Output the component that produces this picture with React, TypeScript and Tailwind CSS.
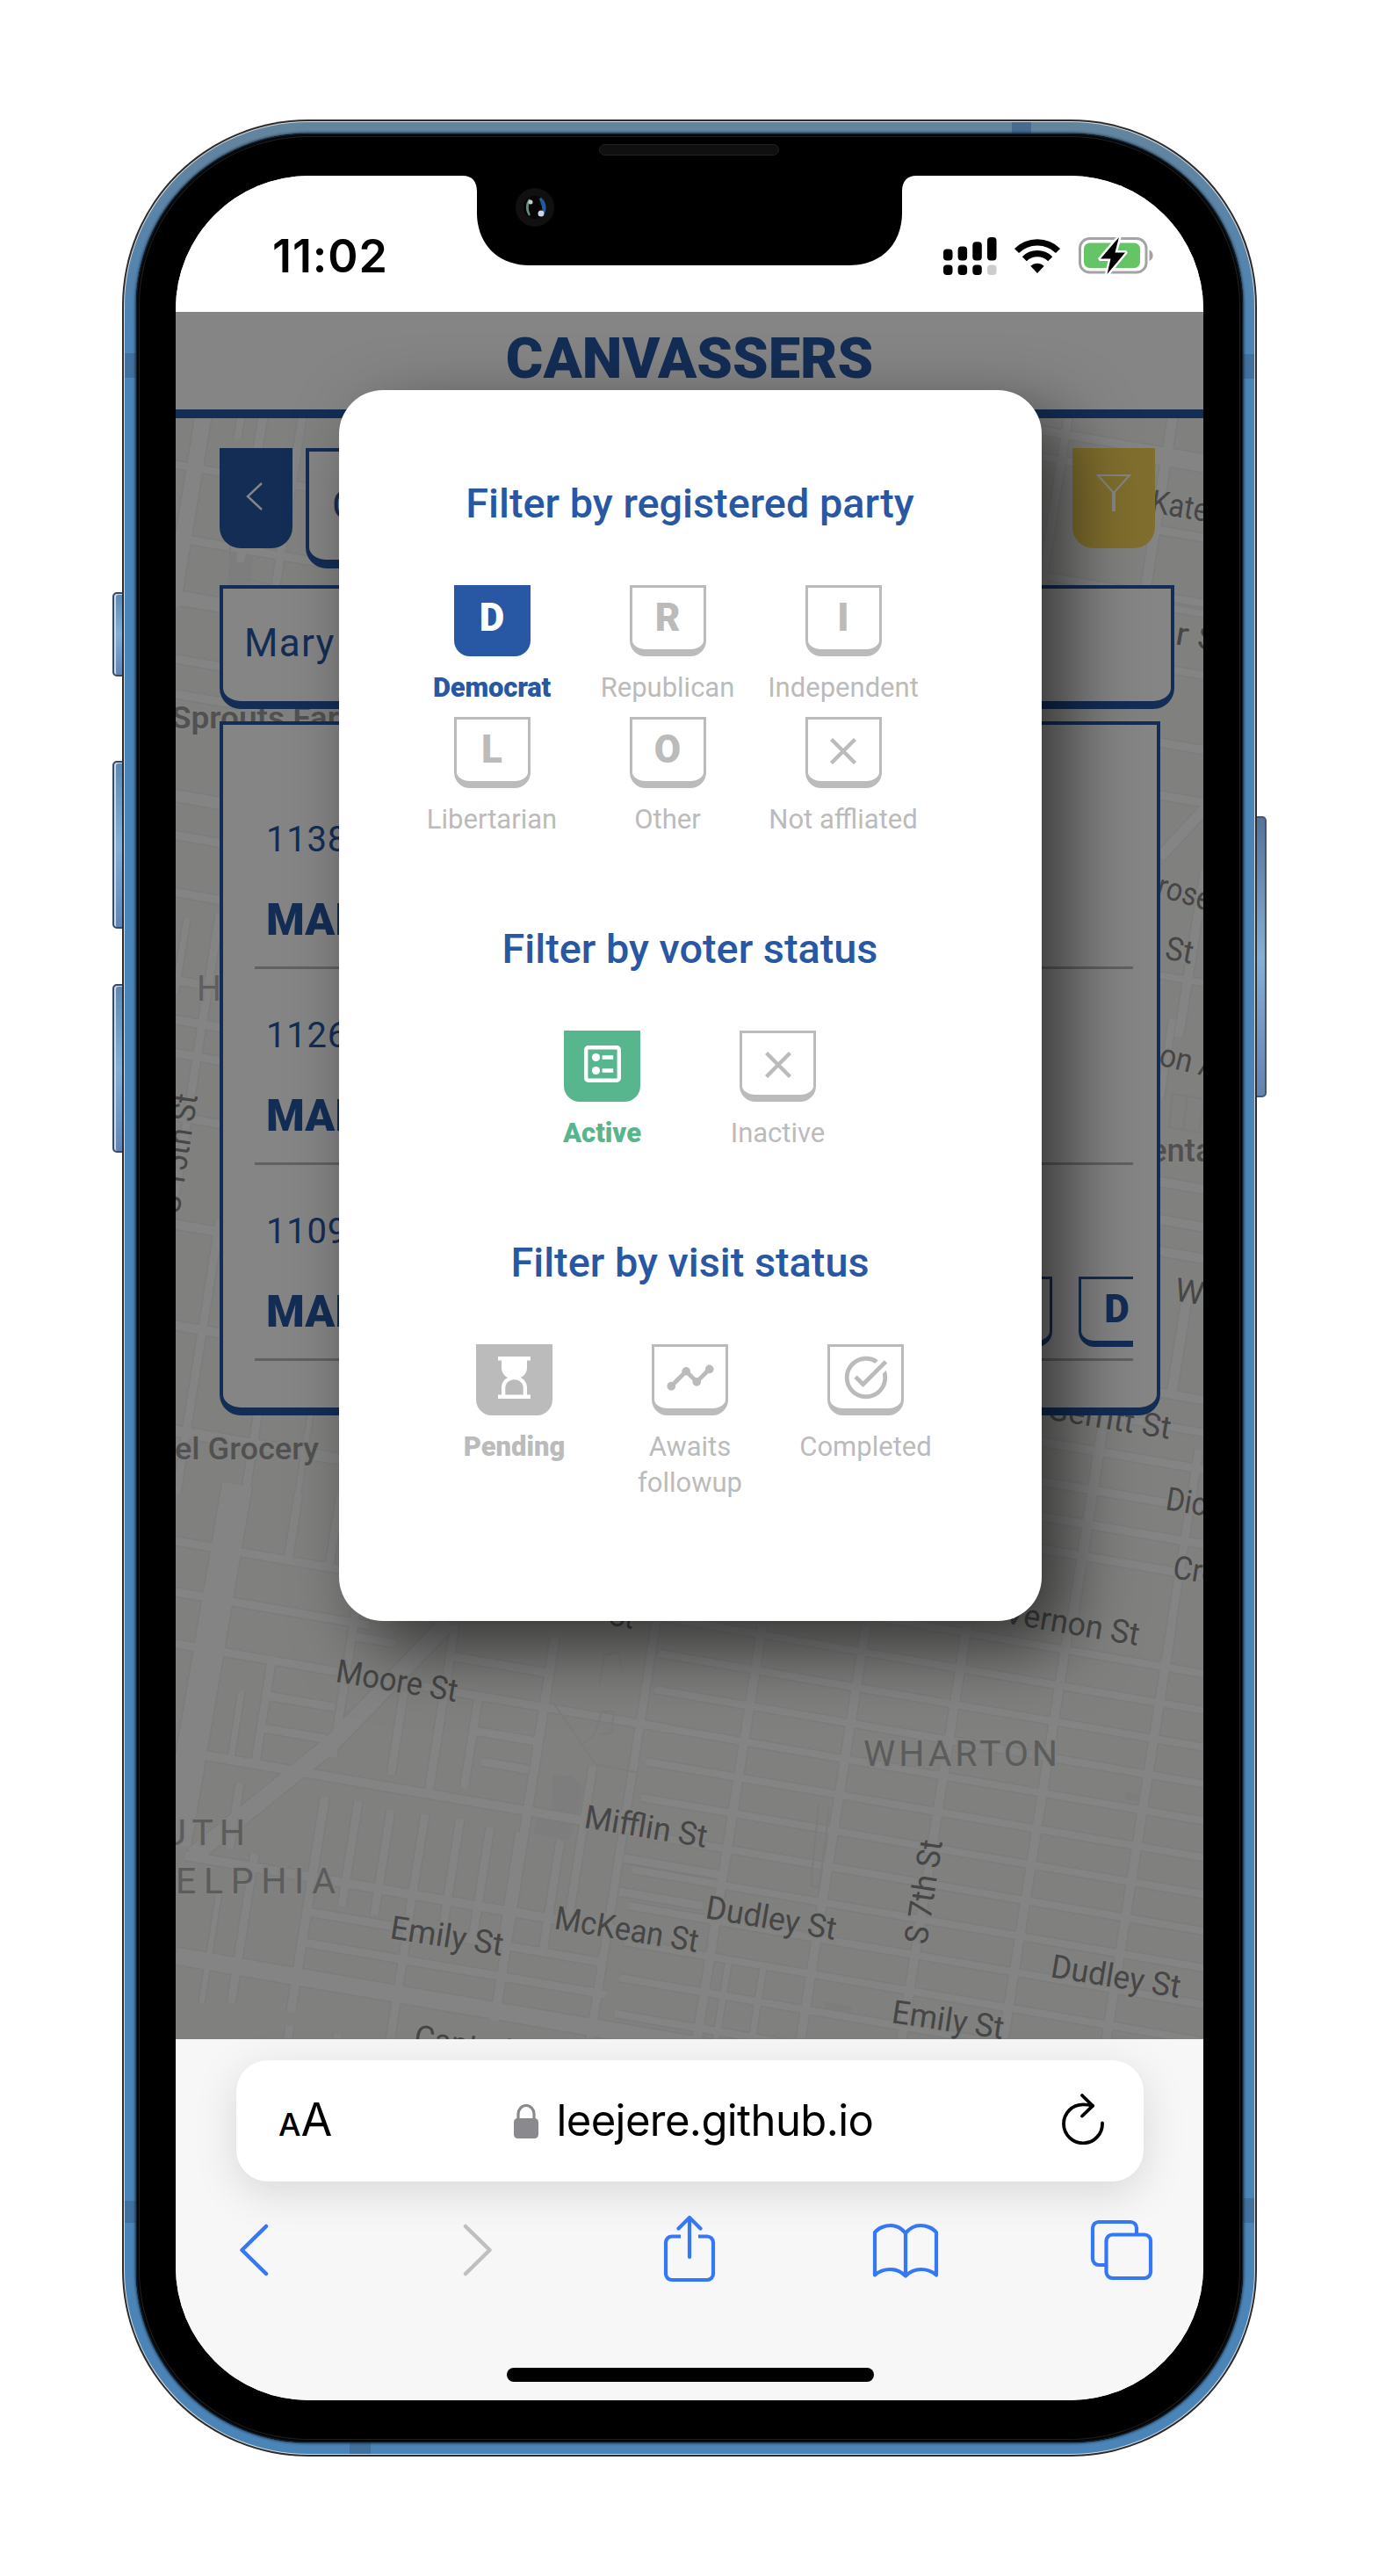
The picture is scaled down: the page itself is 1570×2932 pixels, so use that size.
import React from "react";
import { MdTaskAlt, MdTimeline } from "react-icons/md";

type Pt = [number, number];

/* ---------- Map ---------- */

const ROAD_SLOPE = 0.172;
const AVE_SLOPE = -0.158;

const across = (x1: number, y1: number, x2: number, w = 9): [Pt, Pt, number] => [
  [x1, y1],
  [x2, y1 + (x2 - x1) * ROAD_SLOPE],
  w,
];
const down = (x1: number, y1: number, y2: number, w = 9): [Pt, Pt, number] => [
  [x1, y1],
  [x1 + (y2 - y1) * AVE_SLOPE, y2],
  w,
];

const roads: [Pt, Pt, number][] = [
  // South-east blocks
  ...Array.from({ length: 17 }, (_, i) => across(760 - i * 5, 1800 + i * 41, 1372, 8)),
  ...[868, 986, 1101, 1217, 1334].map((x) => down(x, 1850, 2325, 10)),
  down(748, 1840, 2325, 9),
  down(829, 2235, 2325, 7),
  down(869, 2240, 2325, 7),
  // South-west blocks
  across(200, 1754, 395),
  across(200, 1812, 420),
  across(200, 1871, 760),
  across(233, 1998, 740, 10),
  across(211, 2112, 720, 10),
  across(345, 2175, 690),
  across(340, 2210, 690),
  across(200, 2226, 900, 19),
  across(304, 1930, 381),
  across(300, 1967, 371),
  across(400, 1862, 450),
  across(513, 1885, 625),
  across(540, 1970, 610),
  across(548, 2005, 602),
  across(710, 2115, 820),
  across(705, 2153, 800),
  down(632, 1863, 2300, 10),
  down(518, 1850, 2040),
  down(545, 1930, 2035),
  down(507, 1920, 2030),
  down(460, 1925, 2020),
  down(412, 1790, 2000),
  down(388, 1700, 1780),
  down(340, 1700, 1775),
  down(310, 1885, 2010, 9),
  down(275, 1925, 2005, 7),
  down(273, 2030, 2105),
  down(370, 2045, 2290, 10),
  down(408, 2050, 2170),
  down(445, 2060, 2180),
  down(484, 2065, 2190),
  down(524, 2070, 2195),
  down(558, 2080, 2205),
  down(592, 2085, 2210),
  down(638, 2095, 2220),
  down(675, 2010, 2200),
  down(290, 2110, 2280),
  down(250, 2150, 2280, 6),
  down(465, 2190, 2325),
  down(330, 2305, 2325),
  down(385, 2315, 2325),
  [[510, 1847], [376, 1986], 19],
  [[376, 1986], [220, 2112], 19],
  [[270, 1690], [200, 2100], 34],
  // West edge
  [[232, 470], [196, 690], 18],
  across(195, 528, 420, 8),
  across(200, 612, 420, 9),
  across(200, 680, 300, 16),
  across(200, 750, 300),
  across(200, 790, 300),
  across(196, 905, 300, 13),
  across(196, 950, 300),
  across(196, 1015, 300),
  down(300, 470, 640, 10),
  down(345, 470, 680, 9),
  down(275, 470, 500, 8),
  down(250, 1040, 1400, 9),
  down(213, 1045, 1130, 7),
  across(196, 1115, 255),
  across(196, 1160, 260),
  across(196, 1198, 255),
  across(196, 1270, 255),
  across(196, 1393, 250, 10),
  across(196, 1508, 255, 10),
  down(250, 1390, 1700, 9),
  across(196, 1628, 390, 12),
  down(295, 1600, 1700, 9),
  down(355, 1600, 1700, 6),
  // East edge
  down(1216, 476, 700, 9),
  across(1186, 490, 1372, 9),
  across(1186, 520, 1300, 8),
  across(1310, 520, 1372, 14),
  across(1300, 600, 1372, 9),
  across(1186, 655, 1372, 8),
  down(1335, 476, 680, 11),
  across(1320, 690, 1372, 7),
  across(1320, 760, 1372, 8),
  across(1320, 845, 1372, 9),
  across(1320, 905, 1372, 9),
  [[1321, 975], [1372, 920], 12],
  down(1372, 990, 1180, 10),
  across(1320, 1110, 1372, 7),
  down(1335, 1160, 1250, 8),
  across(1320, 1345, 1372, 10),
  across(1320, 1388, 1372, 10),
  across(1320, 1424, 1372, 10),
  down(1354, 1460, 1590, 11),
  across(1320, 1585, 1372, 9),
  across(1180, 1598, 1372, 8),
  across(1180, 1640, 1372, 9),
  across(1180, 1685, 1372, 9),
  across(1180, 1725, 1372, 9),
  across(1180, 1762, 1372, 9),
  down(1257, 1615, 1850, 11),
  down(1365, 1650, 1850, 9),
];

interface Label {
  t: string;
  a: Pt;
  b: Pt;
  size?: number;
  fill?: string;
  weight?: number;
}

const labels: Label[] = [
  { t: "Kate", a: [1309, 583], b: [1374, 594] },
  { t: "r St", a: [1337, 733], b: [1400, 744] },
  { t: "Sprouts Far", a: [195, 829], b: [386, 829], weight: 600, fill: "#9c9c9c", size: 35 },
  { t: "rose", a: [1315, 1019], b: [1376, 1037] },
  { t: "St", a: [1325, 1091], b: [1356, 1097] },
  { t: "on A", a: [1318, 1212], b: [1384, 1228] },
  { t: "ental", a: [1309, 1322], b: [1390, 1322], weight: 500, fill: "#9a9a9a", size: 36 },
  { t: "Wi", a: [1336, 1480], b: [1377, 1487] },
  { t: "H", a: [224, 1139], b: [252, 1139], fill: "#b4b4b4", size: 41 },
  { t: "S 15th St", a: [204, 1382], b: [225, 1247] },
  { t: "el Grocery", a: [199, 1661], b: [363, 1661], weight: 500, fill: "#9c9c9c", size: 35 },
  { t: "Gerritt St", a: [1191, 1615], b: [1331, 1638] },
  { t: "Dick", a: [1326, 1718], b: [1388, 1728] },
  { t: "Cro", a: [1334, 1796], b: [1386, 1804] },
  { t: "Vernon St", a: [1142, 1847], b: [1295, 1873] },
  { t: "St", a: [692, 1849], b: [720, 1854] },
  { t: "Moore St", a: [381, 1914], b: [519, 1937] },
  { t: "Mifflin St", a: [664, 2080], b: [803, 2103] },
  { t: "McKean St", a: [630, 2195], b: [793, 2222] },
  { t: "Dudley St", a: [802, 2183], b: [950, 2208] },
  { t: "Emily St", a: [443, 2206], b: [571, 2226] },
  { t: "S 7th St", a: [1055, 2214], b: [1073, 2096] },
  { t: "Dudley St", a: [1195, 2250], b: [1342, 2274] },
  { t: "Emily St", a: [1014, 2302], b: [1141, 2321] },
  { t: "Cantrell", a: [470, 2330], b: [588, 2350] },
];

const CityMap = () => (
  <svg viewBox="200 476 1170 1845" width="1170" height="1845" className="absolute left-0 top-[121px]" fontFamily="Roboto, sans-serif">
    <rect x="200" y="476" width="1170" height="1845" fill="#f5f5f1" />
    <g fill="#eeefee">
      <path d="M262 630l26 4-3 38-26-3z" />
      <path d="M630 2020l22 2 12 14-6 26-10 32-40-6 4-28 16 2z" />
      <path d="M1282 2040l18 3-2 8-18-3zM938 2278l32 6-2 14-30-6z" />
    </g>
    {roads.map(([a, b, w], i) => (
      <line key={i} x1={a[0]} y1={a[1]} x2={b[0]} y2={b[1]} stroke="#ebedee" strokeWidth={w + 3} />
    ))}
    {roads.map(([a, b, w], i) => (
      <line key={i} x1={a[0]} y1={a[1]} x2={b[0]} y2={b[1]} stroke="#fdfdfd" strokeWidth={w} />
    ))}
    <g fill="none" stroke="#ebedee" strokeWidth="2">
      <path d="M630 1938l48 70 46 9M659 1988l18-14 8-26h14l-3 24-14 2M932 2054l-9 92 10 2 11-91" />
      <path d="M262 590v64l30 8 80 20M246 1900M682 1918l6-34 16-4 4 22M1335 1245l36 6-6 38-34-6zM1352 1248l-5 38" />
    </g>
    {labels.map((l, i) => {
      const dx = l.b[0] - l.a[0];
      const dy = l.b[1] - l.a[1];
      return (
        <text
          key={i}
          transform={`translate(${l.a[0]} ${l.a[1]}) rotate(${(Math.atan2(dy, dx) * 180) / Math.PI})`}
          textLength={Math.hypot(dx, dy)}
          lengthAdjust="spacingAndGlyphs"
          fontSize={l.size ?? 37}
          fontWeight={l.weight ?? 400}
          fill={l.fill ?? "#868686"}
          stroke="#f8f8f5"
          strokeWidth="4"
          paintOrder="stroke"
        >
          {l.t}
        </text>
      );
    })}
    <g fill="#b0b0b0" fontWeight="400" stroke="#f8f8f5" strokeWidth="4" paintOrder="stroke" fontSize="41">
      <text x="983" y="2010" textLength="221" lengthAdjust="spacing">WHARTON</text>
      <text x="119" y="2100" textLength="160" lengthAdjust="spacing">SOUTH</text>
      <text x="200" y="2155" textLength="182" lengthAdjust="spacing">ELPHIA</text>
    </g>
  </svg>
);

/* ---------- Voter list ---------- */

const voters = [
  { number: "1138", name: "MARY", tags: false },
  { number: "1126", name: "MARY", tags: false },
  { number: "1109", name: "MARY", tags: true },
];

const Tag = ({ children }: { children?: React.ReactNode }) => (
  <div className="mt-[28px] flex h-[80px] w-[87px] shrink-0 justify-center rounded-b-[18px] border-[3px] border-b-[7px] border-[#2857a4] text-[44px] leading-[68px] font-black">
    {children}
  </div>
);

const VoterRow = ({ number, name, tags }: (typeof voters)[number]) => (
  <div className="flex h-[223px] flex-col overflow-hidden border-b-[3px] border-[#bbb] pl-[13px] text-[#2857a4]">
    <div className="mt-[52px] text-[40px] leading-[48px] tracking-[0.8px]">{number}</div>
    <div className="-mt-px flex items-start">
      <div className="mt-[38px] w-[808px] shrink-0 text-[50px] leading-[60px] font-black">{name}</div>
      {tags && (
        <div className="flex gap-[30px]">
          <Tag />
          <Tag>D</Tag>
        </div>
      )}
    </div>
  </div>
);

/* ---------- Filter modal ---------- */

const CrossIcon = () => (
  <svg width="30" height="30" viewBox="0 0 30 30" fill="none" stroke="currentColor" strokeWidth="4.4" className="mt-[3px]">
    <path d="M1.5 1.5l27 27M28.5 1.5l-27 27" />
  </svg>
);

const BallotIcon = () => (
  <svg width="42" height="42" viewBox="0 0 42 42" fill="currentColor">
    <rect x="2.2" y="2.2" width="37.6" height="37.6" rx="2.5" fill="none" stroke="currentColor" strokeWidth="4.4" />
    <circle cx="13.5" cy="13.5" r="4.6" />
    <circle cx="13.5" cy="28.5" r="4.6" />
    <path d="M20.6 11.3h12.6v4.4H20.6zM20.6 26.3h12.6v4.4H20.6z" />
  </svg>
);

const HourglassIcon = () => (
  <svg width="37" height="48" viewBox="0 0 37 48" fill="currentColor">
    <path d="M0 0h37v4.6h-4v7.9c0 5.3-2.7 9-7 11.5 4.300 2.500 7 6.200 7 11.500v7.900h4V48H0v-4.600h4v-7.900c0-5.300 2.700-9 7-11.500-4.300-2.500-7-6.200-7-11.500V4.600H0z" />
    <path d="M8.300 43.400v-7.500c0-5.600 4.600-9.600 10.200-9.600s10.200 4 10.200 9.600v7.500z" fill="#bbb" />
  </svg>
);

interface Option {
  label: string;
  mark: React.ReactNode;
  tile?: string;
  text?: string;
}

const OptionCell = ({ label, mark, tile, text }: Option) => (
  <div className="flex w-[200px] flex-col items-center">
    <div
      className={
        "flex h-[81px] w-[87px] items-center justify-center rounded-b-[18px] border-[3px] border-b-[8px] text-[44px] leading-[60px] font-black " +
        (tile ?? "border-[#bbb] bg-white text-[#bbb]")
      }
    >
      {mark}
    </div>
    <div className={"mt-[15px] text-center text-[31px] leading-[41px] whitespace-pre " + (text ?? "text-[#bbb]")}>{label}</div>
  </div>
);

const Heading = ({ children }: { children: string }) => (
  <h2 className="-ml-px text-center text-[46.800px] leading-[56px] font-medium text-[#2857a4]">{children}</h2>
);

const letter = (c: string) => <span className="-mt-[2px]">{c}</span>;

const parties: Option[] = [
  { label: "Democrat", mark: letter("D"), tile: "border-[#2857a4] bg-[#2857a4] text-white", text: "text-[#2857a4] font-black tracking-[-0.200px]" },
  { label: "Republican", mark: letter("R") },
  { label: "Independent", mark: letter("I") },
  { label: "Libertarian", mark: letter("L") },
  { label: "Other", mark: letter("O") },
  { label: "Not affliated", mark: <CrossIcon /> },
];

const FilterModal = () => (
  <div className="absolute top-[89px] left-[186px] flex h-[1401px] w-[800px] flex-col rounded-[50px] bg-white pt-[101px] shadow-[30px_30px_80px_rgba(0,0,0,0.6)]">
    <Heading>Filter by registered party</Heading>
    <div className="mt-[65px] ml-[74px] grid w-[600px] grid-cols-3 gap-y-[12.5px]">
      {parties.map((p) => (
        <OptionCell key={p.label} {...p} />
      ))}
    </div>
    <div className="mt-[99px]">
      <Heading>Filter by voter status</Heading>
    </div>
    <div className="mt-[65px] -ml-px flex justify-center">
      <OptionCell label="Active" mark={<BallotIcon />} tile="border-[#57b68d] bg-[#57b68d] text-white" text="text-[#57b68d] font-black" />
      <OptionCell label="Inactive" mark={<CrossIcon />} />
    </div>
    <div className="mt-[99px]">
      <Heading>Filter by visit status</Heading>
    </div>
    <div className="mt-[65px] -ml-px flex justify-center">
      <OptionCell label="Pending" mark={<HourglassIcon />} tile="border-[#bbb] bg-[#bbb] text-white" text="text-[#bbb] font-black" />
      <OptionCell label={"Awaits\nfollowup"} mark={<MdTimeline size={58} className="shrink-0" />} />
      <OptionCell label="Completed" mark={<MdTaskAlt size={58} className="shrink-0" />} />
    </div>
  </div>
);

/* ---------- Web page ---------- */

const Page = () => (
  <div className="relative h-[1966px] overflow-hidden bg-white font-['Roboto',sans-serif]">
    <CityMap />
    <div className="relative flex h-[121px] justify-center border-b-[10px] border-[#2857a4] bg-white">
      <h1 className="text-[65px] leading-[106px] font-black text-[#2857a4]">CANVASSERS</h1>
    </div>
    <div className="relative pt-[34px] pl-[50px]">
      <div className="flex h-[137px] items-start">
        <div className="flex h-[114px] w-[83px] items-center justify-center rounded-b-[24px] bg-[#2857a4]">
          <svg width="20" height="34" viewBox="0 0 20 34" fill="none" stroke="#fff" strokeWidth="2.4" className="-mt-[4px] -ml-[3px]">
            <path d="M18 2L2 17l16 15" />
          </svg>
        </div>
        <div className="ml-[15px] h-[137px] w-[820px] rounded-b-[24px] border-[4px] border-b-[10px] border-[#2857a4] bg-white pl-[26px] text-[44px] leading-[122px] text-[#2857a4]">
          Canvass list
        </div>
        <div className="ml-[53px] flex h-[114px] w-[94px] justify-center rounded-b-[24px] bg-[#f5d459] pt-[29px]">
          <svg width="40" height="44" viewBox="0 0 40 44" fill="none" stroke="#fff" strokeWidth="2">
            <path d="M2 2h36L20 22z" />
            <path d="M20 21v22" strokeWidth="4" />
          </svg>
        </div>
      </div>
      <div className="mt-[19px] h-[141px] w-[1087px] rounded-b-[24px] border-[4px] border-b-[9px] border-[#2857a4] bg-white pl-[24px] text-[44px] leading-[125px] tracking-[1.300px] text-[#2857a4]">
        Mary
      </div>
      <div className="mt-[14px] h-[790px] w-[1071px] rounded-b-[24px] border-[4px] border-b-[9px] border-[#2857a4] bg-white pt-[55px] pr-[27px] pl-[36px]">
        {voters.map((v) => (
          <VoterRow key={v.number} {...v} />
        ))}
      </div>
    </div>
    <div className="absolute inset-0 bg-black/48" />
    <FilterModal />
  </div>
);

/* ---------- Phone chrome ---------- */

const StatusBar = () => (
  <div className="flex h-[155px] items-center justify-between bg-white pt-[28px] pr-[55px] pl-[110px]">
    <div className="font-['Inter',sans-serif] text-[52px] leading-[60px] font-semibold tracking-[0.900px] text-black">11:02</div>
    <div className="flex items-center">
      <svg width="61" height="43" viewBox="0 0 61 43">
        <rect x="0" y="13.500" width="10.500" height="13" rx="4" />
        <rect x="16.600" y="10.500" width="10.500" height="16" rx="4" />
        <rect x="33.300" y="5.300" width="10.500" height="21.200" rx="4" />
        <rect x="50" y="0" width="10.500" height="26.500" rx="4" />
        <rect x="0" y="31.500" width="10.500" height="11.500" rx="4" />
        <rect x="16.600" y="31.500" width="10.500" height="11.500" rx="4" />
        <rect x="33.300" y="31.500" width="10.500" height="11.500" rx="4" />
        <rect x="50" y="31.500" width="10.500" height="11.500" rx="4" fill="#ccc" />
      </svg>
      <svg width="54" height="40" viewBox="0 0 54 40" className="ml-[19px]">
        <g fill="none" stroke="#000" strokeWidth="7.200">
          <path d="M3.500 13.500a33.500 33.500 0 0 1 47 0" />
          <path d="M12.300 22.700a21 21 0 0 1 29.400 0" />
        </g>
        <path d="M27 39l-7.700-8.300a11.500 11.500 0 0 1 15.400 0z" />
      </svg>
      <svg width="87" height="43" viewBox="0 0 87 43" className="ml-[20px]">
        <rect x="1.500" y="1.500" width="75.500" height="38.500" rx="11" fill="#fff" stroke="#a3a3a3" strokeWidth="3" />
        <rect x="6" y="6.500" width="64" height="28.500" rx="6.500" fill="#65c466" />
        <path d="M80.500 14.500c5.500 2 5.500 10.500 0 12.500z" fill="#a3a3a3" />
        <path d="M46 0L25 24.500h11.500L32.500 42 53 17.500H41.500z" stroke="#fff" strokeWidth="5" paintOrder="stroke" strokeLinejoin="round" />
      </svg>
    </div>
  </div>
);

const Notch = () => (
  <svg width="516" height="102" viewBox="0 0 516 102" className="absolute top-0 left-[327px]">
    <path d="M0 0C10 0 16 6 16 18V42C16 78 40 102 76 102H440C476 102 500 78 500 42V18C500 6 506 0 516 0z" />
    <circle cx="82" cy="36" r="22" fill="#101011" />
    <circle cx="82" cy="36" r="13" fill="#050505" />
    <path d="M76 27a11 13 0 0 0 0 18c-3-6-3-12 0-18z" fill="#5f8f7c" stroke="#5f8f7c" strokeWidth="2" />
    <path d="M88 26a13 13 0 0 1 4 16c0-6-1-11-4-16z" fill="#245a9c" stroke="#245a9c" strokeWidth="3" />
    <circle cx="77" cy="30" r="2.500" fill="#b9d0c6" />
    <circle cx="89" cy="43" r="3.500" fill="#cfd3ee" />
  </svg>
);

const SafariBar = () => (
  <div className="relative flex h-[411px] flex-col bg-[#f7f7f7] font-['Inter',sans-serif]">
    <div className="mt-[24px] ml-[69px] flex h-[138px] w-[1033px] items-center rounded-[36px] bg-white pl-[48px] shadow-[0_12px_50px_rgba(0,0,0,0.13)]">
      <div className="flex items-baseline pt-[3px] text-black">
        <span className="text-[36px] leading-[60px] font-medium">A</span>
        <span className="text-[52px] leading-[60px]">A</span>
      </div>
      <svg width="28" height="39" viewBox="0 0 28 39" className="ml-[207px]">
        <rect x="0" y="16" width="28" height="23" rx="4.500" fill="#8a898e" />
        <path d="M5 18V11a9 9.500 0 0 1 18 0v7" fill="none" stroke="#8a898e" strokeWidth="3.200" />
      </svg>
      <div className="ml-[20px] w-[374px] text-[49px] leading-[60px] tracking-[-0.600px] whitespace-nowrap text-black">leejere.github.io</div>
      <svg width="48" height="58" viewBox="0 0 48 58" fill="none" stroke="#000" strokeWidth="3.800" strokeLinecap="round" strokeLinejoin="round" className="-mt-[4px] ml-[202px]">
        <path d="M46 33.500A22 22 0 1 1 24 12.300c4 0 7 .3 11 1.500" />
        <path d="M23 2l12 11.800L23 25.500" />
      </svg>
    </div>
    <div className="mt-[38px] flex h-[80px] items-center pl-[72px] text-[#3478f6]">
      <svg width="34" height="60" viewBox="0 0 34 60" fill="none" stroke="currentColor" strokeWidth="4.500" strokeLinecap="round" strokeLinejoin="round">
        <path d="M31 3L3.500 30 31 57" />
      </svg>
      <svg width="34" height="60" viewBox="0 0 34 60" fill="none" stroke="#bfbfbf" strokeWidth="4.500" strokeLinecap="round" strokeLinejoin="round" className="ml-[221px]">
        <path d="M3 3l27.500 27L3 57" />
      </svg>
      <svg width="60" height="77" viewBox="0 0 60 77" fill="none" stroke="currentColor" strokeWidth="4.200" strokeLinecap="round" strokeLinejoin="round" className="-mt-[3px] ml-[194px]">
        <path d="M20 24.500H10a7 7 0 0 0-7 7V67a7 7 0 0 0 7 7h40a7 7 0 0 0 7-7V31.500a7 7 0 0 0-7-7H40" strokeLinecap="butt" />
        <path d="M30 48V3M17.500 15.500L30 3l12.500 12.500" />
      </svg>
      <svg width="76" height="64" viewBox="0 0 76 64" fill="none" stroke="currentColor" strokeWidth="4.200" strokeLinejoin="round" className="mt-[2px] ml-[178px]">
        <path d="M38 12C33 5.500 27 3 21 3S7 5.500 3 11v48.500C8 55 14 53 20.500 53S33 55.500 38 60.500C43 55.500 49 53 55.500 53S68 55 73 59.500V11C69 5.500 61 3 55 3s-12 2.500-17 9zM38 12v48.500" />
      </svg>
      <svg width="72" height="70" viewBox="0 0 72 70" fill="none" stroke="currentColor" strokeWidth="4.200" className="ml-[172px]">
        <path d="M17 52H10a7 7 0 0 1-7-7V10a7 7 0 0 1 7-7h36a7 7 0 0 1 7 7v7" />
        <rect x="18.500" y="17.500" width="50.500" height="49.500" rx="7" />
      </svg>
    </div>
    <div className="mt-[94px] ml-[377px] h-[16px] w-[418px] rounded-full bg-black" />
  </div>
);

export default function App() {
  return (
    <div className="h-[2932px] w-[1570px] overflow-hidden bg-white pt-[136px] pl-[139px]">
      <div className="relative h-[2660px] w-[1292px]">
        {/* Side buttons */}
        <div className="absolute top-[538px] left-[-11px] h-[96px] w-[16px] rounded-l-[5px] border-2 border-[#3b4a63] bg-linear-to-b from-[#6089b0] via-[#86afd6] to-[#6284b3] shadow-[inset_2px_1px_0_#c9daef]" />
        <div className="absolute top-[730px] left-[-11px] h-[191px] w-[16px] rounded-l-[5px] border-2 border-[#3b4a63] bg-linear-to-b from-[#6089b0] via-[#86afd6] to-[#6284b3] shadow-[inset_2px_1px_0_#c9daef]" />
        <div className="absolute top-[984px] left-[-11px] h-[192px] w-[16px] rounded-l-[5px] border-2 border-[#3b4a63] bg-linear-to-b from-[#6089b0] via-[#86afd6] to-[#6284b3] shadow-[inset_2px_1px_0_#c9daef]" />
        <div className="absolute top-[793px] right-[-11px] h-[320px] w-[16px] rounded-r-[5px] border-2 border-[#45557a] bg-linear-to-b from-[#52749a] via-[#86afd6] to-[#6284b3]" />

        <div className="relative h-full rounded-[212px] bg-[#2c2c2e] p-[2px]">
          <div className="h-full rounded-[210px] bg-[#d5dbe0] p-[1px]">
            <div className="relative h-full overflow-hidden rounded-[209px] bg-linear-to-b from-[#64849d] to-[#4b84b7] to-10% p-[13px]">
              {/* Antenna bands */}
              <div className="absolute top-0 left-[1010px] h-[20px] w-[22px] bg-[#476a8e]" />
              <div className="absolute top-[263px] left-0 h-[28px] w-[20px] bg-[#42709c]" />
              <div className="absolute top-[264px] right-0 h-[28px] w-[20px] bg-[#42709c]" />
              <div className="absolute top-[2366px] left-0 h-[25px] w-[20px] bg-[#42709c]" />
              <div className="absolute top-[2363px] right-0 h-[28px] w-[20px] bg-[#42709c]" />
              <div className="absolute bottom-0 left-[256px] h-[20px] w-[24px] bg-[#42709c]" />
              <div className="relative h-full rounded-[196px] bg-black px-[45px] pt-[48px] shadow-[inset_0_0_0_1px_#10202e,inset_0_0_0_3px_#050505,inset_0_0_0_4px_#1d1f21,0_0_3px_1px_#15283a]">
                <div className="absolute top-[12px] left-[527px] h-[13px] w-[205px] rounded-full border border-[#222] bg-[#101010]" />
                <div className="relative h-[2532px] w-[1170px] overflow-hidden rounded-[152px] bg-white">
                  <StatusBar />
                  <Page />
                  <SafariBar />
                  <Notch />
                </div>
              </div>
            </div>
          </div>
        </div>
      </div>
    </div>
  );
}
